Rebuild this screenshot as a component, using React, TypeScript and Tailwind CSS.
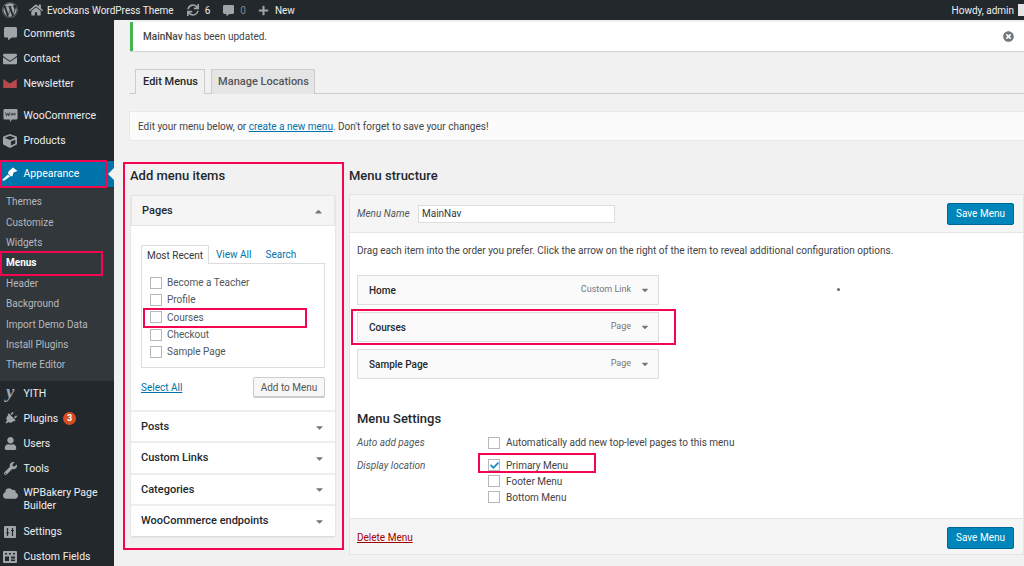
import React from 'react';
import {
  FaWordpress, FaHome, FaSync, FaCommentAlt, FaPlus, FaEnvelope, FaCube, FaPlug, FaUser, FaWrench,
  FaTimesCircle, FaCheck, FaCaretUp, FaCaretDown, FaCloud,
} from 'react-icons/fa';

const iconClass = 'text-[#a0a5aa] text-[14px]';

const WooIcon = () => (
  <svg width="15" height="15" viewBox="0 0 17 17" className="text-[#a0a5aa]">
    <path d="M2 1h13a1.500 1.500 0 0 1 1.500 1.500v9a1.500 1.500 0 0 1-1.500 1.500h-5l-1.500 3-1-3H2a1.500 1.500 0 0 1-1.500-1.500v-9A1.500 1.500 0 0 1 2 1z" fill="currentColor" />
    <path d="M3 5l1 4 1.500-3 1 3 1-4M9 7a1 1 0 1 0 2 0a1 1 0 1 0-2 0M12 7a1 1 0 1 0 2 0a1 1 0 1 0-2 0" fill="none" stroke="#23282d" strokeWidth="0.9" />
  </svg>
);

const NewsIcon = () => (
  <svg width="14" height="9" viewBox="0 0 15 10">
    <path d="M0 0l7.500 5L15 0v10H0z" fill="#b6494c" />
  </svg>
);

const BrushIcon = () => (
  <svg width="16" height="14" viewBox="0 0 16 14">
    <path d="M0.500 12.500L6 7.500l2 2-5.500 4H0.500zM6.500 4.500L11 0.500l4.500 3.500-4 1.500-1 3.500-1.500 0.500-3-3z" fill="#ffffff" />
  </svg>
);

const SettingsIcon = () => (
  <svg width="12" height="12" viewBox="0 0 12 12">
    <rect width="12" height="12" rx="1" fill="#a0a5aa" />
    <path d="M3.500 2v8M8.500 2v8M2 7h3M7 4.500h3" stroke="#23282d" strokeWidth="1.200" />
  </svg>
);

const FieldsIcon = () => (
  <svg width="14" height="12" viewBox="0 0 14 12">
    <rect width="14" height="12" rx="1" fill="#a0a5aa" />
    <path d="M2 2h2v1.500H2zM6 2h2v1.500H6zM10 2h2v1.500h-2zM2 5.500h4v4.500H2zM8 5.500h4v2H8zM8 8.500h4V10H8z" fill="#23282d" />
  </svg>
);

const YithIcon = () => (
  <span className="-mt-[3px] font-['Liberation_Serif',serif] text-[19px] font-bold italic leading-[14px] text-[#a0a5aa]">y</span>
);

const Item = ({ icon, label }: { icon: React.ReactNode; label: string }) => (
  <div className="flex h-[25px] items-center text-[10.500px] text-[#eeeeee]">
    <span className="flex w-[23.500px] shrink-0 justify-center pr-[3px]">{icon}</span>
    <span>{label}</span>
  </div>
);

const subItems = ['Themes', 'Customize', 'Widgets', 'Menus', 'Header', 'Background', 'Import Demo Data', 'Install Plugins', 'Theme Editor'];

const Sidebar = () => (
  <aside className="w-[114px] shrink-0 bg-[#23282d] pt-[1px]">
    <Item icon={<FaCommentAlt className="text-[13px] text-[#a0a5aa]" />} label="Comments" />
    <Item icon={<FaEnvelope className={iconClass} />} label="Contact" />
    <Item icon={<NewsIcon />} label="Newsletter" />
    <div className="h-[7px]" />
    <Item icon={<WooIcon />} label="WooCommerce" />
    <Item icon={<FaCube className={iconClass} />} label="Products" />
    <div className="h-[8px]" />
    <div className="relative">
      <div className="flex h-[26px] items-center bg-[#0073aa] text-[10.500px] text-white">
        <span className="flex w-[23.500px] shrink-0 justify-center pr-[3px]"><BrushIcon /></span>
        <span>Appearance</span>
      </div>
      <div className="absolute left-0 top-[-1px] h-[28px] w-[107px] border-2 border-[#f5054f]" />
      <div className="absolute right-0 top-[7px] h-0 w-0 border-y-[6px] border-r-[6px] border-y-transparent border-r-[#f1f1f1]" />
    </div>
    <div className="h-[194px] bg-[#32373c] pt-[4.500px] text-[10px] text-[#b4b9be]">
      {subItems.map((name) => (
        <div key={name} className={`relative flex h-[20.400px] items-center pl-[6px] ${name === 'Menus' ? 'font-bold text-white' : ''}`}>
          {name}
          {name === 'Menus' && <div className="absolute left-0 top-[-2px] h-[25px] w-[103px] border-2 border-[#f5054f]" />}
        </div>
      ))}
    </div>
    <Item icon={<YithIcon />} label="YITH" />
    <div className="flex h-[25px] items-center text-[10.500px] text-[#eeeeee]">
      <span className="flex w-[23.500px] shrink-0 justify-center pr-[3px]"><FaPlug className="rotate-45 text-[13px] text-[#a0a5aa]" /></span>
      <span>Plugins</span>
      <span className="ml-[5px] flex h-[13px] w-[13px] items-center justify-center rounded-full bg-[#d54e21] text-[9px] font-bold text-white">3</span>
    </div>
    <Item icon={<FaUser className="text-[13px] text-[#a0a5aa]" />} label="Users" />
    <Item icon={<FaWrench className="text-[13px] text-[#a0a5aa]" />} label="Tools" />
    <div className="flex h-[38px] pt-[5px] text-[10.500px] leading-[13px] text-[#eeeeee]">
      <span className="flex w-[23.500px] shrink-0 justify-center pr-[2px]"><FaCloud className="text-[15px] text-[#a0a5aa]" /></span>
      <span>WPBakery Page<br />Builder</span>
    </div>
    <Item icon={<SettingsIcon />} label="Settings" />
    <Item icon={<FieldsIcon />} label="Custom Fields" />
  </aside>
);

const TopBar = () => (
  <header className="flex h-[20px] shrink-0 items-center bg-[#23282d] text-[10px] text-[#eeeeee]">
    <FaWordpress className="ml-[2px] text-[16px] text-[#a0a5aa]" />
    <FaHome className="ml-[11px] text-[14px] text-[#a0a5aa]" />
    <span className="ml-[4px]">Evockans WordPress Theme</span>
    <FaSync className="ml-[13px] text-[12px] text-[#a0a5aa]" />
    <span className="ml-[6px]">6</span>
    <FaCommentAlt className="ml-[13px] text-[11px] text-[#a0a5aa]" />
    <span className="ml-[6px] text-[#82878c]">0</span>
    <FaPlus className="ml-[12px] text-[11px] text-[#a0a5aa]" />
    <span className="ml-[6px]">New</span>
    <span className="ml-auto">Howdy, admin</span>
    <span className="ml-[4px] h-[12px] w-[6px] bg-[#e5e5e5]" />
  </header>
);

const Check = ({ checked = false }: { checked?: boolean }) => (
  <span className="flex h-[12px] w-[12px] shrink-0 items-center justify-center border border-[#b4b9be] bg-white">
    {checked && <FaCheck className="text-[9px] text-[#1e8cbe]" />}
  </span>
);

const pages = ['Become a Teacher', 'Profile', 'Courses', 'Checkout', 'Sample Page'];
const sections = ['Posts', 'Custom Links', 'Categories', 'WooCommerce endpoints'];

const AddItems = () => (
  <section className="h-[388px] w-[221px] shrink-0 border-2 border-[#f5054f] pl-[6px] pr-[7px]">
    <h2 className="-ml-[1px] flex h-[24px] items-center text-[13px] font-medium text-[#23282d]">Add menu items</h2>
    <div className="mt-[7px] bg-white shadow-[0_1px_2px_rgba(0,0,0,0.12)]">
      <div className="flex h-[31px] items-center justify-between border border-[#e5e5e5] bg-[#f5f5f5] px-[10px] pt-[1px] text-[11px] font-medium text-[#23282d]">
        Pages
        <FaCaretUp className="text-[11px] text-[#72777c]" />
      </div>
      <div className="h-[184px] px-[10px] pt-[19px]">
        <div className="flex h-[18px] items-end text-[10px]">
          <span className="relative top-[1px] z-10 flex h-[19px] w-[68px] items-center justify-center border border-b-0 border-[#dddddd] bg-white text-[#32373c]">Most Recent</span>
          <span className="ml-[7px] pb-[1px] text-[#0073aa]">View All</span>
          <span className="ml-[14px] pb-[1px] text-[#0073aa]">Search</span>
        </div>
        <div className="h-[105px] border border-[#dddddd] pl-[8px] pt-[10px] text-[10px] text-[#50575e]">
          {pages.map((page) => (
            <div key={page} className="relative flex h-[17.300px] items-center gap-[5px]">
              <Check />
              {page}
              {page === 'Courses' && <div className="absolute left-[-7px] top-[-1px] h-[20px] w-[164px] border-2 border-[#f5054f]" />}
            </div>
          ))}
        </div>
        <div className="mt-[9px] flex items-center justify-between text-[10px]">
          <a className="pt-[1px] text-[#0073aa] underline">Select All</a>
          <button className="h-[20px] w-[72px] rounded-[2px] border border-[#cccccc] bg-[#f7f7f7] pt-[1px] text-[#555555] shadow-[0_1px_0_#cccccc]">Add to Menu</button>
        </div>
      </div>
      {sections.map((name) => (
        <div key={name} className="flex h-[31.400px] items-center justify-between border-t-2 border-[#eeeeee] px-[10px] pt-[1px] text-[11px] font-medium text-[#23282d]">
          {name}
          <FaCaretDown className="text-[11px] text-[#72777c]" />
        </div>
      ))}
    </div>
  </section>
);

const SaveButton = () => (
  <button className="h-[22px] w-[67px] rounded-[2px] border border-[#006799] bg-[#0085ba] text-[10px] text-white">Save Menu</button>
);

const menuItems = [
  { name: 'Home', kind: 'Custom Link' },
  { name: 'Courses', kind: 'Page' },
  { name: 'Sample Page', kind: 'Page' },
];

const MenuStructure = () => (
  <section className="ml-[5px] min-w-0 flex-1">
    <h2 className="mt-[2px] flex h-[24px] items-center text-[13px] font-medium text-[#23282d]">Menu structure</h2>
    <div className="mt-[6px] h-[361px] border border-[#e5e5e5] bg-white">
      <div className="flex h-[38px] items-center border-b border-[#e5e5e5] bg-[#f5f5f5] px-[7px] text-[10px]">
        <span className="w-[61px] italic text-[#50575e]">Menu Name</span>
        <span className="flex h-[18px] w-[197px] items-center border border-[#dddddd] bg-white pl-[3px] text-[#32373c]">MainNav</span>
        <span className="ml-auto mr-[2px]"><SaveButton /></span>
      </div>
      <div className="h-[285px] px-[7px] text-[10px] text-[#444444]">
        <p className="pt-[10px]">Drag each item into the order you prefer. Click the arrow on the right of the item to reveal additional configuration options.</p>
        <div className="mt-[17px] flex flex-col gap-[7px]">
          {menuItems.map((item) => (
            <div key={item.name} className="relative flex h-[30px] w-[302px] items-center border border-[#dddddd] bg-[#fafafa] pl-[11px] pr-[8px]">
              <span className="font-medium text-[#23282d]">{item.name}</span>
              <span className="ml-auto text-[9px] text-[#72777c]">{item.kind}</span>
              <FaCaretDown className="ml-[9px] text-[10px] text-[#72777c]" />
              {item.name === 'Courses' && <div className="absolute left-[-7px] top-[-4px] h-[36px] w-[325px] border-2 border-[#f5054f]" />}
              {item.name === 'Home' && <span className="absolute left-[479px] top-[12px] h-[3px] w-[3px] rounded-full bg-[#666666]" />}
            </div>
          ))}
        </div>
        <h3 className="mt-[30px] text-[13px] font-medium leading-[20px] text-[#23282d]">Menu Settings</h3>
        <div className="mt-[2px] flex h-[23px] items-center">
          <span className="w-[131px] italic text-[#50575e]">Auto add pages</span>
          <Check />
          <span className="ml-[6px]">Automatically add new top-level pages to this menu</span>
        </div>
        <div className="flex">
          <span className="flex h-[23px] w-[131px] items-center italic text-[#50575e]">Display location</span>
          <div className="pt-[3px]">
            <div className="relative flex h-[16px] items-center gap-[6px]">
              <Check checked /> Primary Menu
              <div className="absolute left-[-10px] top-[-4px] h-[20px] w-[118px] border-2 border-[#f5054f]" />
            </div>
            <div className="flex h-[16px] items-center gap-[6px]"><Check /> Footer Menu</div>
            <div className="flex h-[16px] items-center gap-[6px]"><Check /> Bottom Menu</div>
          </div>
        </div>
      </div>
      <div className="flex h-[36px] items-center justify-between border-t border-[#e5e5e5] bg-[#f5f5f5] px-[7px] pt-[2px] text-[10px]">
        <a className="text-[#a00000] underline">Delete Menu</a>
        <span className="mr-[2px]"><SaveButton /></span>
      </div>
    </div>
  </section>
);

export default function App() {
  return (
    <div className="flex h-[566px] w-[1024px] flex-col overflow-hidden bg-[#f1f1f1] font-['Roboto',sans-serif]">
      <TopBar />
      <div className="flex min-h-0 flex-1">
        <Sidebar />
        <main className="min-w-0 flex-1 pl-[16px]">
          <div className="mt-[2px] flex h-[29px] items-center justify-between border-l-[3px] border-[#46b450] bg-white pl-[10px] pr-[10px] text-[10px] text-[#444444] shadow-[0_1px_1px_rgba(0,0,0,0.1)]">
            <span><span className="font-medium">MainNav</span> has been updated.</span>
            <FaTimesCircle className="text-[11px] text-[#72777c]" />
          </div>
          <div className="mt-[18px] flex h-[25px] gap-[6px] border-b border-[#cccccc] pl-[5px] text-[11px] font-medium">
            <span className="flex h-[25px] w-[70px] items-center justify-center border border-b-0 border-[#cccccc] bg-[#f1f1f1] pl-[1px] text-[#23282d]">Edit Menus</span>
            <span className="flex h-[25px] w-[104px] items-center justify-center border border-b-0 border-[#cccccc] bg-[#e5e5e5] pl-[1px] text-[#555555]">Manage Locations</span>
          </div>
          <div className="mt-[18px] flex h-[28px] items-center bg-[#fbfbfb] pl-[8px] text-[10px] text-[#444444] shadow-[0_0_1px_rgba(0,0,0,0.2)]">
            <span>Edit your menu below, or <a className="text-[#0073aa] underline">create a new menu</a>. Don't forget to save your changes!</span>
          </div>
          <div className="-ml-[7px] mt-[22px] flex">
            <AddItems />
            <MenuStructure />
          </div>
        </main>
      </div>
    </div>
  );
}
